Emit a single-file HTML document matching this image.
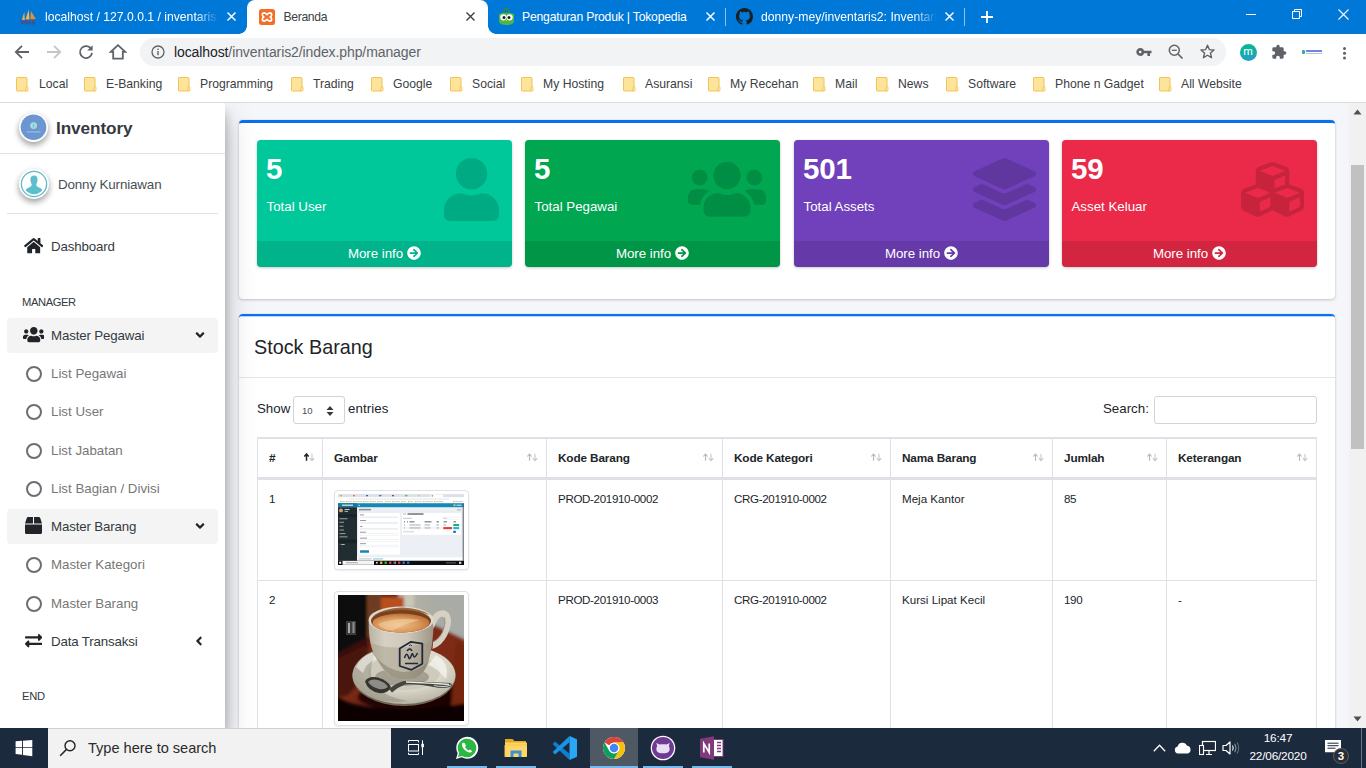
<!DOCTYPE html>
<html>
<head>
<meta charset="utf-8">
<title>Beranda</title>
<style>
*{box-sizing:border-box;margin:0;padding:0}
html,body{width:1366px;height:768px;overflow:hidden;background:#fff;font-family:"Liberation Sans",sans-serif;}
.abs{position:absolute}
#tabbar{position:absolute;left:0;top:0;width:1366px;height:34px;background:#0078d7;}
.tab{position:absolute;top:0;height:34px;color:#fff;font-size:12.2px;line-height:34px;white-space:nowrap;overflow:hidden}
.tab .tt{position:absolute;left:0;top:0}
.tabx{position:absolute;top:11px;width:11px;height:11px}
#activetab{position:absolute;left:247px;top:0;width:241px;height:34px;background:#fff;border-radius:8px 8px 0 0;}
#activetab:before,#activetab:after{content:"";position:absolute;bottom:0;width:8px;height:8px;background:radial-gradient(circle at 0 0,rgba(255,255,255,0) 7.5px,#fff 8px);}
#activetab:before{left:-8px}
#activetab:after{right:-8px;background:radial-gradient(circle at 100% 0,rgba(255,255,255,0) 7.5px,#fff 8px);}
#toolbar{position:absolute;left:0;top:34px;width:1366px;height:36px;background:#fff}
#omni{position:absolute;left:140px;top:4px;width:1086px;height:28px;border-radius:14px;background:#f1f3f4}
#url{position:absolute;left:174px;top:0;line-height:36px;font-size:14px;color:#202124;white-space:nowrap;letter-spacing:-0.1px}
#url span{color:#5f6368}
#bm{position:absolute;left:0;top:70px;width:1366px;height:33px;background:#fff;border-bottom:1px solid #dadce0}
.bk{position:absolute;top:0;line-height:28px;font-size:12.2px;color:#3c4043;white-space:nowrap}
.fold{position:absolute;top:6.500px;width:13px;height:15px}
#page{position:absolute;left:0;top:103px;width:1349px;height:625px;background:#f4f6f9;overflow:hidden;font-size:14.4px;color:#212529}
#sb{position:absolute;left:1349px;top:103px;width:17px;height:625px;background:#f1f1f1}
#taskbar{position:absolute;left:0;top:728px;width:1366px;height:40px;background:#1c2a3d}

#side{position:absolute;left:0;top:0;width:225px;height:625px;background:#fff;box-shadow:0 14px 28px rgba(0,0,0,.25),0 10px 10px rgba(0,0,0,.22);z-index:5}
.nt{position:absolute;white-space:nowrap;line-height:20px;height:20px;font-size:13.300px;color:#343a40;margin-top:1px;letter-spacing:-.15px}
.nt.sub{color:#777;letter-spacing:0}
.hl{position:absolute;left:7px;width:211px;height:35px;border-radius:4px;background:#f4f4f5}
.ico{position:absolute;fill:#212529}
.circ{position:absolute;left:25.500px;width:16px;height:16px;border:2px solid #6b6f73;border-radius:50%}

.card{position:absolute;left:239px;width:1096px;background:#fff;border-top:3px solid #fff;border-radius:4px;box-shadow:0 0 1px rgba(0,0,0,.125),0 1px 3px rgba(0,0,0,.2)}
.sbx{position:absolute;top:17px;width:255px;height:127px;border-radius:4px;box-shadow:0 0 1px rgba(0,0,0,.125),0 1px 3px rgba(0,0,0,.2);overflow:hidden;color:#fff}
.sbx .ft{position:absolute;left:0;bottom:0;width:100%;height:26px;background:rgba(0,0,0,.1)}
.sbx .num{position:absolute;left:9px;top:11px;font-size:29.500px;font-weight:700;line-height:36px;white-space:nowrap;letter-spacing:-.2px}
.sbx .lb{position:absolute;left:9.500px;top:56.500px;font-size:13.300px;line-height:20px;white-space:nowrap}
.sbx .mi{position:absolute;left:91px;top:103.500px;font-size:13.300px;line-height:20px;white-space:nowrap;letter-spacing:-.05px}
.sbx svg.bi{position:absolute;fill:rgba(0,0,0,.15)}
.sbx svg.ar{position:absolute;left:150px;top:106px;fill:#fff}
table.dt{position:absolute;left:18px;top:120px;border-collapse:collapse;font-size:11.700px;color:#212529}

.tb{position:absolute;background:#dee2e6}
.th{position:absolute;top:133px;font-size:11.800px;font-weight:700;line-height:16px;white-space:nowrap;color:#212529;letter-spacing:-.15px}
.td{position:absolute;font-size:11.600px;line-height:16px;white-space:nowrap;color:#212529;letter-spacing:-.35px}
.srt{position:absolute;top:136px}
.thumb{position:absolute;left:95px;width:135px;border:1px solid #dee2e6;border-radius:4px;background:#fff;padding:3px 4px 4px 3px;box-shadow:0 1px 2px rgba(0,0,0,.075);overflow:hidden}
.card:before{content:"";position:absolute;left:0;top:-3px;width:100%;height:6px;border-top:2px solid #0672f3;border-radius:4px 4px 0 0}
.card:after{content:"";position:absolute;left:3px;right:3px;top:-1px;height:1px;background:rgba(6,114,243,.28)}
.c1:before{border-top-width:3px}.c1:after{display:none}
</style>
</head>
<body>
<!-- ===== Chrome tab strip ===== -->
<div id="tabbar">
  <!-- tab 1 -->
  <svg class="abs" style="left:20px;top:8px" width="18" height="18" viewBox="0 0 18 18">
    <path d="M1.800 12.300 L4.300 3.800 L4.900 12.300 Z" fill="#f6a545"/><path d="M5.600 11.400 L8.700 1.500 L9.500 11.400 Z" fill="#f8b458"/><path d="M10.300 11.200 L10.900 3 L15.800 10.900 Z" fill="#ef8d1f"/>
    <path d="M1.600 16.600 V12.900 H4 Q5.200 13 5.200 14 Q5.200 15 4 15.100 H1.600 M6.600 16.600 V12.900 L8.400 15.300 L10.200 12.900 V16.600 M11.600 16.600 L13.500 12.900 L15.400 16.600 M12.300 15.500 H14.700" stroke="#46508a" stroke-width="1.300" fill="none"/>
  </svg>
  <div class="tab" style="left:45px;width:174px;-webkit-mask-image:linear-gradient(90deg,#000 150px,transparent 174px)"><span class="tt">localhost / 127.0.0.1 / inventaris2</span></div>
  <svg class="tabx" style="left:226px" viewBox="0 0 11 11"><path d="M1.5 1.5 L9.5 9.5 M9.5 1.5 L1.5 9.5" stroke="#fff" stroke-width="1.5"/></svg>
  <!-- active tab -->
  <div id="activetab"></div>
  <svg class="abs" style="left:259px;top:9px" width="16" height="16" viewBox="0 0 16 16"><rect width="16" height="16" rx="2.500" fill="#f56e25"/>
    <path d="M4 4.2 C5.5 3.2 7 4.6 8 5.6 C9 4.6 10.5 3.2 12 4.2 C13.4 5.4 12.4 7.2 11.2 8 C12.4 8.8 13.4 10.600 12 11.800 C10.500 12.800 9 11.400 8 10.400 C7 11.400 5.500 12.800 4 11.800 C2.600 10.600 3.600 8.800 4.800 8 C3.600 7.200 2.600 5.400 4 4.200 Z" fill="none" stroke="#fff" stroke-width="1.7" stroke-linejoin="round"/></svg>
  <div class="tab" style="left:283.500px;width:150px;color:#3c4043;letter-spacing:-.35px"><span class="tt">Beranda</span></div>
  <svg class="tabx" style="left:465px" viewBox="0 0 11 11"><path d="M1.5 1.5 L9.5 9.5 M9.5 1.5 L1.5 9.500" stroke="#3c4043" stroke-width="1.400"/></svg>
  <!-- tab 3 -->
  <svg class="abs" style="left:498px;top:8px" width="17" height="18" viewBox="0 0 17 18">
    <path d="M5.500 5 Q5.500 1 8.500 1 Q11.500 1 11.500 5" fill="none" stroke="#2f8f3a" stroke-width="1.300"/>
    <path d="M1 6 Q8.500 3.500 16 6 L16 13 Q16 17 8.500 17 Q1 17 1 13 Z" fill="#4cb748"/>
    <circle cx="5.400" cy="9.300" r="3.100" fill="#fff"/><circle cx="11.600" cy="9.300" r="3.100" fill="#fff"/>
    <circle cx="6" cy="9.500" r="1.500" fill="#222"/><circle cx="11" cy="9.500" r="1.500" fill="#222"/>
    <path d="M7.600 12 L8.500 13.600 L9.400 12 Z" fill="#f7c52b"/>
  </svg>
  <div class="tab" style="left:522px;width:175px;letter-spacing:-.2px"><span class="tt">Pengaturan Produk | Tokopedia</span></div>
  <svg class="tabx" style="left:705px" viewBox="0 0 11 11"><path d="M1.500 1.500 L9.500 9.500 M9.500 1.500 L1.500 9.500" stroke="#fff" stroke-width="1.500"/></svg>
  <div class="abs" style="left:725px;top:8px;width:1px;height:18px;background:rgba(255,255,255,.55)"></div>
  <!-- tab 4 -->
  <svg class="abs" style="left:736px;top:8px" width="17" height="17" viewBox="0 0 16 16"><path fill="#1b1f23" d="M8 0C3.580 0 0 3.580 0 8c0 3.540 2.290 6.530 5.470 7.590.4.070.55-.170.55-.380 0-.190-.010-.820-.010-1.490-2.010.370-2.530-.490-2.690-.940-.090-.230-.480-.940-.820-1.130-.280-.150-.680-.520-.010-.530.630-.010 1.080.580 1.230.820.720 1.210 1.870.870 2.330.660.070-.520.280-.870.510-1.070-1.780-.200-3.640-.890-3.640-3.950 0-.870.310-1.590.820-2.150-.080-.200-.360-1.020.080-2.120 0 0 .670-.210 2.200.820.640-.180 1.320-.270 2-.270.680 0 1.360.090 2 .270 1.530-1.040 2.200-.820 2.200-.820.440 1.100.160 1.920.080 2.120.510.560.820 1.270.820 2.150 0 3.070-1.870 3.750-3.650 3.950.290.250.540.730.540 1.480 0 1.070-.010 1.930-.010 2.200 0 .210.150.460.550.380A8.013 8.013 0 0016 8c0-4.420-3.580-8-8-8z"/></svg>
  <div class="tab" style="left:761px;width:176px;-webkit-mask-image:linear-gradient(90deg,#000 152px,transparent 176px)"><span class="tt">donny-mey/inventaris2: Inventaris</span></div>
  <svg class="tabx" style="left:944px" viewBox="0 0 11 11"><path d="M1.500 1.500 L9.500 9.500 M9.500 1.500 L1.500 9.500" stroke="#fff" stroke-width="1.500"/></svg>
  <div class="abs" style="left:964px;top:8px;width:1px;height:18px;background:rgba(255,255,255,.55)"></div>
  <svg class="abs" style="left:980px;top:10px" width="14" height="14" viewBox="0 0 14 14"><path d="M7 1 V13 M1 7 H13" stroke="#fff" stroke-width="1.800"/></svg>
  <!-- window controls -->
  <div class="abs" style="left:1246px;top:14px;width:10px;height:1px;background:#fff"></div>
  <svg class="abs" style="left:1292px;top:9px" width="10" height="10" viewBox="0 0 10 10"><path d="M.5 2.500 h7 v7 h-7 z M2.500 2.500 V.5 h7 v7 H7.500" fill="none" stroke="#fff" stroke-width="1"/></svg>
  <svg class="abs" style="left:1338px;top:9px" width="11" height="11" viewBox="0 0 11 11"><path d="M.5 .5 L10.500 10.500 M10.500 .5 L.5 10.500" stroke="#fff" stroke-width="1.100"/></svg>
</div>
<!-- ===== toolbar ===== -->
<div id="toolbar">
  <div id="omni"></div>
  <!-- back -->
  <svg class="abs" style="left:14px;top:10px" width="16" height="16" viewBox="0 0 16 16"><path d="M15 8 H2.500 M8 1.800 L1.800 8 L8 14.200" fill="none" stroke="#5f6368" stroke-width="1.800"/></svg>
  <!-- forward -->
  <svg class="abs" style="left:46px;top:10px" width="16" height="16" viewBox="0 0 16 16"><path d="M1 8 H13.500 M8 1.800 L14.200 8 L8 14.200" fill="none" stroke="#c4c7ca" stroke-width="1.800"/></svg>
  <!-- reload -->
  <svg class="abs" style="left:78px;top:10px" width="16" height="16" viewBox="0 0 16 16"><path d="M13.300 5.200 A6 6 0 1 0 14 8.800" fill="none" stroke="#5f6368" stroke-width="1.800"/><path d="M14.600 1.200 V6.600 H9.200 Z" fill="#5f6368"/></svg>
  <!-- home -->
  <svg class="abs" style="left:109px;top:9px" width="18" height="18" viewBox="0 0 18 18"><path d="M9 2.200 L1.800 8.800 H4.200 V15.600 H13.800 V8.800 H16.200 Z" fill="none" stroke="#5f6368" stroke-width="1.800" stroke-linejoin="miter"/></svg>
  <!-- info -->
  <svg class="abs" style="left:151px;top:11px" width="14" height="14" viewBox="0 0 14 14"><circle cx="7" cy="7" r="6" fill="none" stroke="#5f6368" stroke-width="1.300"/><rect x="6.300" y="6" width="1.400" height="4.200" fill="#5f6368"/><rect x="6.300" y="3.600" width="1.400" height="1.400" fill="#5f6368"/></svg>
  <div id="url">localhost<span>/inventaris2/index.php/manager</span></div>
  <!-- key -->
  <svg class="abs" style="left:1136px;top:12px" width="16" height="12" viewBox="0 0 16 12"><circle cx="4.200" cy="6" r="2.600" fill="none" stroke="#5f6368" stroke-width="2.600"/><path d="M7.500 4.700 H15.500 V7.300 H14 V10 H11.400 V7.300 H7.500 Z" fill="#5f6368"/></svg>
  <!-- zoom out -->
  <svg class="abs" style="left:1167px;top:9px" width="18" height="18" viewBox="0 0 18 18"><circle cx="7.300" cy="7.300" r="5" fill="none" stroke="#5f6368" stroke-width="1.500"/><path d="M11 11 L15.500 15.500" stroke="#5f6368" stroke-width="1.700"/><path d="M4.800 7.300 H9.800" stroke="#5f6368" stroke-width="1.300"/></svg>
  <!-- star -->
  <svg class="abs" style="left:1199px;top:9px" width="17" height="17" viewBox="0 0 24 24"><path d="M12 3.200 L14.600 9.300 L21.200 9.900 L16.200 14.200 L17.700 20.700 L12 17.300 L6.300 20.700 L7.800 14.200 L2.800 9.900 L9.400 9.300 Z" fill="none" stroke="#5f6368" stroke-width="2" stroke-linejoin="round"/></svg>
  <!-- avatar -->
  <div class="abs" style="left:1239.500px;top:9.500px;width:17px;height:17px;border-radius:9px;background:linear-gradient(170deg,#0bb39c 30%,#2a9bd0 100%);color:#fff;font-size:11.500px;line-height:15px;text-align:center;font-weight:400">m</div>
  <!-- puzzle -->
  <svg class="abs" style="left:1271px;top:10px" width="16" height="16" viewBox="0 0 24 24"><path fill="#5f6368" d="M20.500 11H19V7c0-1.100-.9-2-2-2h-4V3.500C13 2.120 11.880 1 10.500 1S8 2.120 8 3.500V5H4c-1.100 0-1.990.9-1.990 2v3.800H3.500c1.490 0 2.700 1.210 2.700 2.700s-1.210 2.700-2.700 2.700H2V20c0 1.100.9 2 2 2h3.800v-1.500c0-1.490 1.210-2.700 2.700-2.700 1.490 0 2.700 1.210 2.700 2.700V22H17c1.100 0 2-.9 2-2v-4h1.500c1.380 0 2.500-1.120 2.500-2.500S21.880 11 20.500 11z"/></svg>
  <!-- small ext logo -->
  <div class="abs" style="left:1302px;top:15.500px;width:3px;height:4px;background:#3aa7a0;border-radius:1px"></div>
  <div class="abs" style="left:1306px;top:15.500px;width:16px;height:2px;background:#6f86d9"></div>
  <div class="abs" style="left:1306px;top:18.500px;width:16px;height:1px;background:#b5c1e8"></div>
  <!-- menu -->
  <div class="abs" style="left:1343px;top:12.500px;width:3px;height:3px;border-radius:2px;background:#5f6368;box-shadow:0 4.800px 0 #5f6368,0 9.600px 0 #5f6368"></div>
</div>
<!-- ===== bookmarks ===== -->
<div id="bm">
  <svg class="fold" style="left:16px" viewBox="0 0 13 15"><rect x=".5" y=".5" width="10.500" height="13.500" rx=".6" fill="#fde49b" stroke="#f3c355" stroke-width="1"/><rect x="9.700" y="9.700" width="2.300" height="4.300" rx=".9" fill="#fdeab0" stroke="#f3c355" stroke-width=".9"/></svg><div class="bk" style="left:39px">Local</div>
  <svg class="fold" style="left:84px" viewBox="0 0 13 15"><rect x=".5" y=".5" width="10.500" height="13.500" rx=".6" fill="#fde49b" stroke="#f3c355" stroke-width="1"/><rect x="9.700" y="9.700" width="2.300" height="4.300" rx=".9" fill="#fdeab0" stroke="#f3c355" stroke-width=".9"/></svg><div class="bk" style="left:106px">E-Banking</div>
  <svg class="fold" style="left:178px" viewBox="0 0 13 15"><rect x=".5" y=".5" width="10.500" height="13.500" rx=".6" fill="#fde49b" stroke="#f3c355" stroke-width="1"/><rect x="9.700" y="9.700" width="2.300" height="4.300" rx=".9" fill="#fdeab0" stroke="#f3c355" stroke-width=".9"/></svg><div class="bk" style="left:200px">Programming</div>
  <svg class="fold" style="left:291px" viewBox="0 0 13 15"><rect x=".5" y=".5" width="10.500" height="13.500" rx=".6" fill="#fde49b" stroke="#f3c355" stroke-width="1"/><rect x="9.700" y="9.700" width="2.300" height="4.300" rx=".9" fill="#fdeab0" stroke="#f3c355" stroke-width=".9"/></svg><div class="bk" style="left:313px">Trading</div>
  <svg class="fold" style="left:371px" viewBox="0 0 13 15"><rect x=".5" y=".5" width="10.500" height="13.500" rx=".6" fill="#fde49b" stroke="#f3c355" stroke-width="1"/><rect x="9.700" y="9.700" width="2.300" height="4.300" rx=".9" fill="#fdeab0" stroke="#f3c355" stroke-width=".9"/></svg><div class="bk" style="left:393px">Google</div>
  <svg class="fold" style="left:450px" viewBox="0 0 13 15"><rect x=".5" y=".5" width="10.500" height="13.500" rx=".6" fill="#fde49b" stroke="#f3c355" stroke-width="1"/><rect x="9.700" y="9.700" width="2.300" height="4.300" rx=".9" fill="#fdeab0" stroke="#f3c355" stroke-width=".9"/></svg><div class="bk" style="left:472px">Social</div>
  <svg class="fold" style="left:521px" viewBox="0 0 13 15"><rect x=".5" y=".5" width="10.500" height="13.500" rx=".6" fill="#fde49b" stroke="#f3c355" stroke-width="1"/><rect x="9.700" y="9.700" width="2.300" height="4.300" rx=".9" fill="#fdeab0" stroke="#f3c355" stroke-width=".9"/></svg><div class="bk" style="left:543px">My Hosting</div>
  <svg class="fold" style="left:623px" viewBox="0 0 13 15"><rect x=".5" y=".5" width="10.500" height="13.500" rx=".6" fill="#fde49b" stroke="#f3c355" stroke-width="1"/><rect x="9.700" y="9.700" width="2.300" height="4.300" rx=".9" fill="#fdeab0" stroke="#f3c355" stroke-width=".9"/></svg><div class="bk" style="left:645px">Asuransi</div>
  <svg class="fold" style="left:708px" viewBox="0 0 13 15"><rect x=".5" y=".5" width="10.500" height="13.500" rx=".6" fill="#fde49b" stroke="#f3c355" stroke-width="1"/><rect x="9.700" y="9.700" width="2.300" height="4.300" rx=".9" fill="#fdeab0" stroke="#f3c355" stroke-width=".9"/></svg><div class="bk" style="left:730px">My Recehan</div>
  <svg class="fold" style="left:813px" viewBox="0 0 13 15"><rect x=".5" y=".5" width="10.500" height="13.500" rx=".6" fill="#fde49b" stroke="#f3c355" stroke-width="1"/><rect x="9.700" y="9.700" width="2.300" height="4.300" rx=".9" fill="#fdeab0" stroke="#f3c355" stroke-width=".9"/></svg><div class="bk" style="left:835px">Mail</div>
  <svg class="fold" style="left:876px" viewBox="0 0 13 15"><rect x=".5" y=".5" width="10.500" height="13.500" rx=".6" fill="#fde49b" stroke="#f3c355" stroke-width="1"/><rect x="9.700" y="9.700" width="2.300" height="4.300" rx=".9" fill="#fdeab0" stroke="#f3c355" stroke-width=".9"/></svg><div class="bk" style="left:898px">News</div>
  <svg class="fold" style="left:946px" viewBox="0 0 13 15"><rect x=".5" y=".5" width="10.500" height="13.500" rx=".6" fill="#fde49b" stroke="#f3c355" stroke-width="1"/><rect x="9.700" y="9.700" width="2.300" height="4.300" rx=".9" fill="#fdeab0" stroke="#f3c355" stroke-width=".9"/></svg><div class="bk" style="left:968px">Software</div>
  <svg class="fold" style="left:1033px" viewBox="0 0 13 15"><rect x=".5" y=".5" width="10.500" height="13.500" rx=".6" fill="#fde49b" stroke="#f3c355" stroke-width="1"/><rect x="9.700" y="9.700" width="2.300" height="4.300" rx=".9" fill="#fdeab0" stroke="#f3c355" stroke-width=".9"/></svg><div class="bk" style="left:1055px">Phone n Gadget</div>
  <svg class="fold" style="left:1159px" viewBox="0 0 13 15"><rect x=".5" y=".5" width="10.500" height="13.500" rx=".6" fill="#fde49b" stroke="#f3c355" stroke-width="1"/><rect x="9.700" y="9.700" width="2.300" height="4.300" rx=".9" fill="#fdeab0" stroke="#f3c355" stroke-width=".9"/></svg><div class="bk" style="left:1181px">All Website</div>
</div>
<!-- ===== page ===== -->
<div id="page">
<div id="side">
<div class="abs" style="left:0;top:50px;width:225px;height:1px;background:#dee2e6"></div>
<div class="abs" style="left:19px;top:10px;width:29px;height:29px;border-radius:50%;background:#fff;box-shadow:0 3px 6px rgba(0,0,0,.22),0 3px 6px rgba(0,0,0,.2)"></div><svg class="abs" style="left:19px;top:10px" width="29" height="29" viewBox="0 0 29 29"><circle cx="14.500" cy="14.300" r="12.800" fill="#6c96cf"/><circle cx="14.600" cy="12.600" r="3.400" fill="#a9e3df"/><path d="M12.300 11 L16.800 14.300 M16.800 11 L12.500 14.500 M14.600 9.500 V15.800" stroke="#7fc3d6" stroke-width=".7"/><rect x="7.500" y="18.300" width="14" height="1.200" fill="#9dc6e6" opacity=".85"/></svg>
<div class="abs" style="left:56px;top:14px;font-size:17.200px;font-weight:700;color:#343a40;line-height:22px;white-space:nowrap;letter-spacing:-.1px">Inventory</div>
<div class="abs" style="left:19px;top:66px;width:30px;height:30px;border-radius:50%;background:#fff;box-shadow:0 3px 6px rgba(0,0,0,.22),0 3px 6px rgba(0,0,0,.2)"></div><svg class="abs" style="left:19px;top:66px" width="30" height="30" viewBox="0 0 30 30"><circle cx="15" cy="15" r="12.600" fill="#fff" stroke="#5bbcc8" stroke-width="1.300"/><path d="M15 6.600 C17.600 6.600 18.800 8.600 18.600 11 C18.400 13.300 17.500 14.600 17.300 15.600 C17.200 17.200 18.600 18 20.600 18.700 C22.400 19.300 23.200 20.300 23.300 21.600 Q19.500 25.200 15 25.200 Q10.500 25.200 6.700 21.600 C6.800 20.300 7.600 19.300 9.400 18.700 C11.400 18 12.800 17.200 12.700 15.600 C12.500 14.600 11.600 13.300 11.400 11 C11.200 8.600 12.400 6.600 15 6.600 Z" fill="#5cbfca"/></svg>
<div class="nt" style="left:58px;top:71px;font-size:13.400px;color:#495057">Donny Kurniawan</div>
<div class="abs" style="left:7px;top:110px;width:211px;height:1px;background:#dee2e6"></div>
<svg class="ico" style="left:23.500px;top:134.200px;" width="19.400" height="17.300" viewBox="0 0 576 512"><path d="M280.37 148.26L96 300.11V464a16 16 0 0 0 16 16l112.06-.29a16 16 0 0 0 15.92-16V368a16 16 0 0 1 16-16h64a16 16 0 0 1 16 16v95.64a16 16 0 0 0 16 16.05L464 480a16 16 0 0 0 16-16V300L295.67 148.26a12.19 12.19 0 0 0-15.3 0zM571.6 251.47L488 182.56V44.05a12 12 0 0 0-12-12h-56a12 12 0 0 0-12 12v72.61L318.47 43a48 48 0 0 0-61 0L4.34 251.47a12 12 0 0 0-1.6 16.9l25.5 31A12 12 0 0 0 45.15 301l235.22-193.74a12.19 12.19 0 0 1 15.3 0L530.9 301a12 12 0 0 0 16.9-1.6l25.5-31a12 12 0 0 0-1.7-16.93z"/></svg><div class="nt " style="left:51px;top:133px">Dashboard</div>
<div class="nt" style="left:22px;top:188px;font-size:11.200px;letter-spacing:-.4px;color:#343a40">MANAGER</div>
<div class="hl" style="top:215px"></div><svg class="ico" style="left:22.800px;top:222.600px;" width="21.600" height="17.300" viewBox="0 0 640 512"><path d="M96 224c35.3 0 64-28.7 64-64s-28.7-64-64-64-64 28.7-64 64 28.7 64 64 64zm448 0c35.3 0 64-28.7 64-64s-28.7-64-64-64-64 28.7-64 64 28.7 64 64 64zm32 32h-64c-17.6 0-33.5 7.1-45.1 18.6 40.3 22.1 68.9 62 75.1 109.4h66c17.7 0 32-14.3 32-32v-32c0-35.3-28.7-64-64-64zm-256 0c61.9 0 112-50.1 112-112S381.9 32 320 32 208 82.1 208 144s50.1 112 112 112zm76.8 32h-8.3c-20.8 10-43.9 16-68.5 16s-47.6-6-68.5-16h-8.3C179.6 288 128 339.6 128 403.2V432c0 26.5 21.5 48 48 48h288c26.5 0 48-21.5 48-48v-28.8c0-63.6-51.6-115.2-115.2-115.2zm-223.7-13.4C161.5 263.1 145.6 256 128 256H64c-35.3 0-64 28.7-64 64v32c0 17.7 14.3 32 32 32h65.9c6.3-47.4 34.9-87.3 75.2-109.4z"/></svg><div class="nt " style="left:51px;top:222px">Master Pegawai</div><svg class="ico" style="left:196px;top:225px;transform:rotate(-90deg)" width="8" height="14" viewBox="0 0 256 512"><path d="M31.7 239l136-136c9.4-9.4 24.6-9.4 33.9 0l22.6 22.6c9.4 9.4 9.4 24.6 0 33.9L127.9 256l96.4 96.4c9.4 9.4 9.4 24.6 0 33.9L201.7 409c-9.4 9.4-24.6 9.4-33.9 0l-136-136c-9.5-9.4-9.5-24.6-.1-34z"/></svg>
<div class="circ" style="top:262.5px"></div><div class="nt sub" style="left:51px;top:260px">List Pegawai</div>
<div class="circ" style="top:300.5px"></div><div class="nt sub" style="left:51px;top:298px">List User</div>
<div class="circ" style="top:339.5px"></div><div class="nt sub" style="left:51px;top:337px">List Jabatan</div>
<div class="circ" style="top:377.5px"></div><div class="nt sub" style="left:51px;top:375px">List Bagian / Divisi</div>
<div class="hl" style="top:406px"></div><svg class="ico" style="left:24.800px;top:414.200px;" width="17" height="17" viewBox="0 0 512 512"><path d="M509.5 184.6L458.9 32.8C452.4 13.2 434.1 0 413.4 0H272v192h238.7c-.4-2.5-.4-5-1.2-7.4zM240 0H98.6c-20.7 0-39 13.2-45.5 32.8L2.5 184.6c-.8 2.4-.8 4.9-1.2 7.4H240V0zM0 224v240c0 26.5 21.5 48 48 48h416c26.5 0 48-21.5 48-48V224H0z"/></svg><div class="nt " style="left:51px;top:413px">Master Barang</div><svg class="ico" style="left:196px;top:416px;transform:rotate(-90deg)" width="8" height="14" viewBox="0 0 256 512"><path d="M31.7 239l136-136c9.4-9.4 24.6-9.4 33.9 0l22.6 22.6c9.4 9.4 9.4 24.6 0 33.9L127.9 256l96.4 96.4c9.4 9.4 9.4 24.6 0 33.9L201.7 409c-9.4 9.4-24.6 9.4-33.9 0l-136-136c-9.5-9.4-9.5-24.6-.1-34z"/></svg>
<div class="circ" style="top:453.5px"></div><div class="nt sub" style="left:51px;top:451px">Master Kategori</div>
<div class="circ" style="top:492.5px"></div><div class="nt sub" style="left:51px;top:490px">Master Barang</div>
<svg class="ico" style="left:24.500px;top:529.300px;" width="17.300" height="17.300" viewBox="0 0 512 512"><path d="M0 168v-16c0-13.255 10.745-24 24-24h360V80c0-21.367 25.899-32.042 40.971-16.971l80 80c9.372 9.373 9.372 24.569 0 33.941l-80 80C409.956 271.982 384 261.456 384 240v-48H24c-13.255 0-24-10.745-24-24zm488 152H128v-48c0-21.314-25.862-32.08-40.971-16.971l-80 80c-9.372 9.373-9.372 24.569 0 33.941l80 80C102.057 463.997 128 453.437 128 432v-48h360c13.255 0 24-10.745 24-24v-16c0-13.255-10.745-24-24-24z"/></svg><div class="nt " style="left:51px;top:528px">Data Transaksi</div><svg class="ico" style="left:195px;top:531px;" width="8" height="14" viewBox="0 0 256 512"><path d="M31.7 239l136-136c9.4-9.4 24.6-9.4 33.9 0l22.6 22.6c9.4 9.4 9.4 24.6 0 33.9L127.9 256l96.4 96.4c9.4 9.4 9.4 24.6 0 33.9L201.7 409c-9.4 9.4-24.6 9.4-33.9 0l-136-136c-9.5-9.4-9.5-24.6-.1-34z"/></svg>
<div class="nt" style="left:22px;top:582px;font-size:11.200px;letter-spacing:-.3px;color:#343a40">END</div>
</div>
<div class="card c1" style="top:17px;height:179px">
<div class="sbx" style="left:18px;background:#00c89a"><div class="num">5</div><div class="lb">Total User</div><svg class="bi" style="left:186.500px;top:18px" width="55" height="63" viewBox="0 0 448 512"><path d="M224 256c70.7 0 128-57.3 128-128S294.7 0 224 0 96 57.3 96 128s57.3 128 128 128zm89.6 32h-16.7c-22.2 10.2-46.9 16-72.9 16s-50.6-5.8-72.9-16h-16.7C60.2 288 0 348.2 0 422.4V464c0 26.5 21.5 48 48 48h352c26.5 0 48-21.5 48-48v-41.6c0-74.2-60.2-134.4-134.4-134.4z"/></svg><div class="ft"></div><div class="mi">More info</div><svg class="ar" style="" width="14" height="14" viewBox="0 0 512 512"><path d="M256 8c137 0 248 111 248 248S393 504 256 504 8 393 8 256 119 8 256 8zm-28.9 143.6l75.5 72.400H120c-13.300 0-24 10.700-24 24v16c0 13.300 10.700 24 24 24h182.600l-75.500 72.400c-9.700 9.300-9.900 24.800-.4 34.300l11 10.900c9.400 9.400 24.600 9.400 33.900 0L404.300 273c9.400-9.400 9.400-24.600 0-33.900L271.600 106.300c-9.400-9.400-24.600-9.400-33.900 0l-11 10.900c-9.500 9.600-9.300 25.100.4 34.400z"/></svg></div>
<div class="sbx" style="left:286px;background:#00a650"><div class="num">5</div><div class="lb">Total Pegawai</div><svg class="bi" style="left:163px;top:18px" width="78" height="62.5" viewBox="0 0 640 512"><path d="M96 224c35.3 0 64-28.7 64-64s-28.7-64-64-64-64 28.7-64 64 28.7 64 64 64zm448 0c35.3 0 64-28.7 64-64s-28.7-64-64-64-64 28.7-64 64 28.7 64 64 64zm32 32h-64c-17.6 0-33.5 7.1-45.1 18.6 40.3 22.1 68.9 62 75.1 109.4h66c17.7 0 32-14.3 32-32v-32c0-35.3-28.7-64-64-64zm-256 0c61.9 0 112-50.1 112-112S381.9 32 320 32 208 82.1 208 144s50.1 112 112 112zm76.8 32h-8.3c-20.8 10-43.9 16-68.5 16s-47.6-6-68.5-16h-8.3C179.6 288 128 339.6 128 403.2V432c0 26.5 21.5 48 48 48h288c26.5 0 48-21.5 48-48v-28.8c0-63.6-51.6-115.2-115.2-115.2zm-223.7-13.4C161.5 263.1 145.6 256 128 256H64c-35.3 0-64 28.7-64 64v32c0 17.7 14.3 32 32 32h65.9c6.3-47.4 34.9-87.3 75.2-109.4z"/></svg><div class="ft"></div><div class="mi">More info</div><svg class="ar" style="" width="14" height="14" viewBox="0 0 512 512"><path d="M256 8c137 0 248 111 248 248S393 504 256 504 8 393 8 256 119 8 256 8zm-28.9 143.6l75.5 72.400H120c-13.300 0-24 10.700-24 24v16c0 13.300 10.700 24 24 24h182.600l-75.500 72.400c-9.700 9.300-9.900 24.800-.4 34.300l11 10.900c9.400 9.400 24.600 9.400 33.900 0L404.300 273c9.400-9.400 9.400-24.600 0-33.900L271.600 106.300c-9.400-9.400-24.600-9.400-33.900 0l-11 10.900c-9.500 9.600-9.300 25.100.4 34.400z"/></svg></div>
<div class="sbx" style="left:555px;background:#7140bb"><div class="num">501</div><div class="lb">Total Assets</div><svg class="bi" style="left:179px;top:18px" width="63" height="63" viewBox="0 0 512 512"><path d="M12.41 148.02l232.94 105.67c6.8 3.09 14.49 3.09 21.29 0l232.94-105.67c16.55-7.51 16.55-32.52 0-40.03L266.65 2.31a25.607 25.607 0 0 0-21.29 0L12.41 107.98c-16.55 7.51-16.55 32.53 0 40.04zm487.18 88.28l-58.09-26.33-161.64 73.27c-7.56 3.43-15.59 5.17-23.86 5.17s-16.29-1.74-23.86-5.17L70.51 209.97l-58.1 26.33c-16.55 7.5-16.55 32.5 0 40l232.94 105.59c6.8 3.08 14.49 3.08 21.29 0L499.59 276.3c16.55-7.5 16.55-32.5 0-40zm0 127.8l-57.87-26.23-161.86 73.37c-7.56 3.43-15.59 5.17-23.86 5.17s-16.29-1.74-23.86-5.17L70.29 337.87 12.41 364.1c-16.55 7.5-16.55 32.5 0 40l232.94 105.59c6.8 3.08 14.49 3.08 21.29 0L499.59 404.1c16.55-7.5 16.55-32.5 0-40z"/></svg><div class="ft"></div><div class="mi">More info</div><svg class="ar" style="" width="14" height="14" viewBox="0 0 512 512"><path d="M256 8c137 0 248 111 248 248S393 504 256 504 8 393 8 256 119 8 256 8zm-28.9 143.6l75.5 72.400H120c-13.300 0-24 10.700-24 24v16c0 13.300 10.700 24 24 24h182.600l-75.500 72.400c-9.700 9.300-9.900 24.800-.4 34.300l11 10.900c9.400 9.400 24.600 9.400 33.900 0L404.300 273c9.400-9.400 9.400-24.600 0-33.900L271.600 106.300c-9.400-9.400-24.600-9.400-33.900 0l-11 10.900c-9.500 9.600-9.300 25.100.4 34.400z"/></svg></div>
<div class="sbx" style="left:823px;background:#ea2a48"><div class="num">59</div><div class="lb">Asset Keluar</div><svg class="bi" style="left:179px;top:18px" width="63" height="63" viewBox="0 0 512 512"><path d="M488.6 250.2L392 214V105.5c0-15-9.3-28.4-23.4-33.7l-100-37.5c-8.1-3.1-17.1-3.1-25.3 0l-100 37.5c-14.1 5.3-23.4 18.7-23.4 33.700V214l-96.6 36.200C9.300 255.500 0 268.900 0 283.900V394c0 13.600 7.700 26.100 19.900 32.200l100 50c10.100 5.100 22.100 5.100 32.200 0l103.900-52 103.900 52c10.100 5.100 22.100 5.100 32.200 0l100-50c12.200-6.100 19.900-18.600 19.900-32.200V283.900c0-15-9.300-28.400-23.400-33.700zM358 214.800l-85 31.900v-68.200l85-37v73.300zM154 104.100l102-38.200 102 38.200v.6l-102 41.400-102-41.400v-.6zm84 291.100l-85 42.500v-79.100l85-38.800v75.400zm0-112l-102 41.400-102-41.400v-.6l102-38.200 102 38.200v.6zm240 112l-85 42.500v-79.100l85-38.800v75.400zm0-112l-102 41.400-102-41.400v-.6l102-38.200 102 38.200v.6z"/></svg><div class="ft"></div><div class="mi">More info</div><svg class="ar" style="" width="14" height="14" viewBox="0 0 512 512"><path d="M256 8c137 0 248 111 248 248S393 504 256 504 8 393 8 256 119 8 256 8zm-28.9 143.6l75.5 72.400H120c-13.300 0-24 10.700-24 24v16c0 13.300 10.700 24 24 24h182.600l-75.500 72.400c-9.700 9.300-9.900 24.800-.4 34.300l11 10.900c9.400 9.400 24.600 9.400 33.900 0L404.300 273c9.400-9.400 9.400-24.600 0-33.900L271.600 106.300c-9.400-9.400-24.600-9.400-33.900 0l-11 10.900c-9.500 9.600-9.300 25.100.4 34.400z"/></svg></div>
</div>
<div class="card" style="top:211px;height:500px">
<div class="abs" style="left:15px;top:16px;font-size:19.800px;line-height:28px;white-space:nowrap;color:#212529;letter-spacing:0">Stock Barang</div>
<div class="abs" style="left:0;top:60px;width:1096px;height:1px;background:rgba(0,0,0,.1)"></div>
<div class="abs" style="left:18px;top:82px;font-size:13.300px;line-height:20px">Show</div>
<div class="abs" style="left:54px;top:79px;width:52px;height:28px;border:1px solid #ced4da;border-radius:3px;background:#fff"><span class="abs" style="left:8px;top:7.500px;font-size:9.500px;line-height:12px;color:#495057">10</span><svg class="abs" style="left:32px;top:9px" width="8" height="10" viewBox="0 0 8 10"><path d="M4 0 L7.500 4 H.5 Z M4 10 L7.500 6 H.5 Z" fill="#343a40"/></svg></div>
<div class="abs" style="left:109px;top:82px;font-size:13.300px;line-height:20px;letter-spacing:.1px">entries</div>
<div class="abs" style="left:864px;top:82px;font-size:13.300px;line-height:20px">Search:</div>
<div class="abs" style="left:915px;top:79px;width:163px;height:28px;border:1px solid #ced4da;border-radius:3px;background:#fff"></div>
<div class="tb" style="left:18px;top:120px;width:1060px;height:2px"></div>
<div class="tb" style="left:18px;top:160px;width:1060px;height:3px"></div>
<div class="tb" style="left:18px;top:263px;width:1060px;height:1px"></div>
<div class="tb" style="left:18px;top:120px;width:1px;height:300px"></div>
<div class="tb" style="left:83px;top:120px;width:1px;height:300px"></div>
<div class="tb" style="left:307px;top:120px;width:1px;height:300px"></div>
<div class="tb" style="left:483px;top:120px;width:1px;height:300px"></div>
<div class="tb" style="left:651px;top:120px;width:1px;height:300px"></div>
<div class="tb" style="left:813px;top:120px;width:1px;height:300px"></div>
<div class="tb" style="left:927px;top:120px;width:1px;height:300px"></div>
<div class="tb" style="left:1077px;top:120px;width:1px;height:300px"></div>
<div class="th" style="left:30px">#</div><svg class="srt" style="left:64px" width="13" height="10" viewBox="0 0 13 10"><path d="M3.500 7.800 V1.200 M1.300 3.500 L3.500 1 L5.700 3.500" fill="none" stroke="#212529" stroke-width="1.5"/><path d="M9 .8 V7.400 M6.800 5.100 L9 7.600 L11.200 5.100" fill="none" stroke="#c5c8cb" stroke-width="1.100"/></svg>
<div class="th" style="left:95px">Gambar</div><svg class="srt" style="left:287px" width="13" height="10" viewBox="0 0 13 10"><path d="M3.500 7.800 V1.200 M1.300 3.500 L3.500 1 L5.700 3.500" fill="none" stroke="#b5b8bb" stroke-width="1.1"/><path d="M9 .8 V7.400 M6.800 5.100 L9 7.600 L11.200 5.100" fill="none" stroke="#c5c8cb" stroke-width="1.100"/></svg>
<div class="th" style="left:319px">Kode Barang</div><svg class="srt" style="left:463px" width="13" height="10" viewBox="0 0 13 10"><path d="M3.500 7.800 V1.200 M1.300 3.500 L3.500 1 L5.700 3.500" fill="none" stroke="#b5b8bb" stroke-width="1.1"/><path d="M9 .8 V7.400 M6.800 5.100 L9 7.600 L11.200 5.100" fill="none" stroke="#c5c8cb" stroke-width="1.100"/></svg>
<div class="th" style="left:495px">Kode Kategori</div><svg class="srt" style="left:631px" width="13" height="10" viewBox="0 0 13 10"><path d="M3.500 7.800 V1.200 M1.300 3.500 L3.500 1 L5.700 3.500" fill="none" stroke="#b5b8bb" stroke-width="1.1"/><path d="M9 .8 V7.400 M6.800 5.100 L9 7.600 L11.200 5.100" fill="none" stroke="#c5c8cb" stroke-width="1.100"/></svg>
<div class="th" style="left:663px">Nama Barang</div><svg class="srt" style="left:793px" width="13" height="10" viewBox="0 0 13 10"><path d="M3.500 7.800 V1.200 M1.300 3.500 L3.500 1 L5.700 3.500" fill="none" stroke="#b5b8bb" stroke-width="1.1"/><path d="M9 .8 V7.400 M6.800 5.100 L9 7.600 L11.200 5.100" fill="none" stroke="#c5c8cb" stroke-width="1.100"/></svg>
<div class="th" style="left:825px">Jumlah</div><svg class="srt" style="left:907px" width="13" height="10" viewBox="0 0 13 10"><path d="M3.500 7.800 V1.200 M1.300 3.500 L3.500 1 L5.700 3.500" fill="none" stroke="#b5b8bb" stroke-width="1.1"/><path d="M9 .8 V7.400 M6.800 5.100 L9 7.600 L11.200 5.100" fill="none" stroke="#c5c8cb" stroke-width="1.100"/></svg>
<div class="th" style="left:939px">Keterangan</div><svg class="srt" style="left:1057px" width="13" height="10" viewBox="0 0 13 10"><path d="M3.500 7.800 V1.200 M1.300 3.500 L3.500 1 L5.700 3.500" fill="none" stroke="#b5b8bb" stroke-width="1.1"/><path d="M9 .8 V7.400 M6.800 5.100 L9 7.600 L11.200 5.100" fill="none" stroke="#c5c8cb" stroke-width="1.100"/></svg>
<div class="td" style="left:30px;top:174px">1</div><div class="td" style="left:319px;top:174px">PROD-201910-0002</div><div class="td" style="left:495px;top:174px">CRG-201910-0002</div><div class="td" style="letter-spacing:0;left:663px;top:174px">Meja Kantor</div><div class="td" style="left:825px;top:174px">85</div>
<div class="td" style="left:30px;top:275px">2</div><div class="td" style="left:319px;top:275px">PROD-201910-0003</div><div class="td" style="left:495px;top:275px">CRG-201910-0002</div><div class="td" style="letter-spacing:0;left:663px;top:275px">Kursi Lipat Kecil</div><div class="td" style="left:825px;top:275px">190</div><div class="td" style="left:939px;top:275px">-</div>
<div class="thumb" style="top:173px;height:80px"><svg width="126" height="71" viewBox="0 0 126 71.500" preserveAspectRatio="none" style="display:block">
<rect width="126" height="71.500" fill="#ecf0f5"/>
<rect width="126" height="3.200" fill="#dee1e6"/>
<rect y="3.200" width="126" height="6" fill="#fff"/>
<g opacity=".9"><rect x="2" y="1" width="2" height="1.300" fill="#f39a1d"/><rect x="15" y="1" width="2" height="1.300" fill="#f07020"/><rect x="28" y="1" width="2" height="1.300" fill="#2a56c6"/><rect x="41" y="1" width="2.500" height="1.300" fill="#3b6fc4"/><rect x="54" y="1" width="2" height="1.300" fill="#5a3e99"/><rect x="67" y="1" width="2.500" height="1.300" fill="#4cb748"/><rect x="80" y="1" width="2" height="1.300" fill="#c0c4cc"/></g>
<rect x="92" y=".5" width="13" height="2.700" fill="#fff"/><rect x="93.500" y="1.200" width="1.600" height="1.300" fill="#f07020"/>
<rect x="11" y="4.200" width="100" height="1.800" rx=".9" fill="#eef0f2"/>
<g fill="#f5c344"><rect x="2" y="6.900" width="1.500" height="1.500"/><rect x="8" y="6.900" width="1.500" height="1.500"/><rect x="15" y="6.900" width="1.500" height="1.500"/><rect x="25" y="6.900" width="1.500" height="1.500"/><rect x="32" y="6.900" width="1.500" height="1.500"/><rect x="39" y="6.900" width="1.500" height="1.500"/><rect x="47" y="6.900" width="1.500" height="1.500"/><rect x="54" y="6.900" width="1.500" height="1.500"/><rect x="63" y="6.900" width="1.500" height="1.500"/><rect x="70" y="6.900" width="1.500" height="1.500"/><rect x="77" y="6.900" width="1.500" height="1.500"/><rect x="85" y="6.900" width="1.500" height="1.500"/><rect x="96" y="6.900" width="1.500" height="1.500"/><rect x="115" y="6.900" width="1.500" height="1.500"/></g>
<g fill="#9aa0a6" opacity=".55"><rect x="4" y="7.200" width="3" height=".9"/><rect x="10" y="7.200" width="4" height=".9"/><rect x="17" y="7.200" width="7" height=".9"/><rect x="27" y="7.200" width="4" height=".9"/><rect x="34" y="7.200" width="4" height=".9"/><rect x="41" y="7.200" width="4" height=".9"/><rect x="49" y="7.200" width="4" height=".9"/><rect x="56" y="7.200" width="6" height=".9"/><rect x="65" y="7.200" width="3" height=".9"/><rect x="72" y="7.200" width="3" height=".9"/><rect x="79" y="7.200" width="5" height=".9"/><rect x="87" y="7.200" width="8" height=".9"/><rect x="98" y="7.200" width="7" height=".9"/><rect x="117" y="7.200" width="8" height=".9"/></g>
<rect y="9.300" width="126" height="4" fill="#1489b6"/><rect y="9.300" width="19" height="4" fill="#107aa3"/>
<rect x="4" y="10.600" width="11" height="1.400" fill="#cfe8f2" opacity=".9"/><rect x="20.500" y="11" width="1.500" height=".7" fill="#fff"/><rect x="115.500" y="10.400" width="2" height="1.800" fill="#e0c090"/><rect x="118.500" y="10.800" width="5" height="1" fill="#d5ecf5"/>
<rect y="13.300" width="19" height="54" fill="#222d32"/>
<circle cx="3" cy="16.500" r="2" fill="#d9a070"/><rect x="6.500" y="15.300" width="5" height=".9" fill="#e8ecee"/><rect x="6.500" y="17.200" width="3.500" height=".8" fill="#b8c7ce"/>
<rect y="20.500" width="19" height="2.500" fill="#1a2226"/>
<g fill="#b8c7ce" opacity=".85"><rect x="1.500" y="24.500" width="8" height=".9"/><rect x="1.500" y="28" width="4.500" height=".9"/><rect x="1.500" y="32" width="4" height=".9"/><rect x="1.500" y="35.800" width="4.500" height=".9"/><rect x="1.500" y="39.500" width="6" height=".9"/><rect x="1.500" y="42.700" width="8" height=".9"/></g>
<rect y="46" width="19" height="3.500" fill="#1a2226"/><rect x="1.500" y="50.300" width="1" height="1" fill="#1489b6"/><rect x="3.200" y="50.400" width="3.500" height=".9" fill="#b8c7ce"/>
<rect x="21" y="15" width="12" height="1.500" fill="#5b646b" opacity=".7"/><rect x="119" y="15.600" width="4" height=".8" fill="#9aa0a6"/>
<rect x="20.500" y="18" width="41.500" height="43" fill="#fff"/><rect x="20.500" y="18" width="41.500" height=".5" fill="#c7d3de"/>
<g fill="#eceff1"><rect x="22" y="22.500" width="38" height="1.800"/><rect x="22" y="28.300" width="38" height="1.800"/><rect x="22" y="34.200" width="38" height="1.800"/></g>
<g fill="none" stroke="#dfe3e6" stroke-width=".4"><rect x="22" y="40" width="38" height="2"/><rect x="22" y="46" width="38" height="1.800"/><rect x="22" y="51.500" width="38" height="1.800"/></g>
<g fill="#6b747b" opacity=".8"><rect x="22" y="20.600" width="4" height=".9"/><rect x="22" y="26.300" width="6" height=".9"/><rect x="22" y="32.200" width="2.500" height=".9"/><rect x="22" y="38" width="6" height=".9"/><rect x="22" y="44" width="7" height=".9"/><rect x="22" y="49.600" width="6" height=".9"/></g>
<rect x="22" y="56.600" width="9" height="2.600" rx=".4" fill="#1a86b4"/>
<rect x="64" y="18" width="59" height="23" fill="#fff"/><rect x="64" y="18" width="59" height=".5" fill="#c7d3de"/>
<rect x="65" y="19.800" width="3" height=".8" fill="#9aa0a6"/><rect x="69.500" y="19.600" width="16" height="1.100" fill="#3a4147"/>
<rect x="65" y="24" width="9" height=".8" fill="#b5bbc0"/><rect x="105" y="24" width="4" height=".8" fill="#b5bbc0"/><rect x="109" y="23.300" width="12" height="2.200" fill="none" stroke="#e0e4e8" stroke-width=".4"/>
<g fill="#4a5157"><rect x="66" y="27.600" width="1" height=".9"/><rect x="69" y="27.600" width="1" height=".9"/><rect x="71.500" y="27.600" width="5" height=".9"/><rect x="86.500" y="27.600" width="7" height=".9"/><rect x="98.500" y="27.600" width="2.500" height=".9"/><rect x="105.500" y="27.600" width="3.500" height=".9"/><rect x="115.500" y="27.600" width="2.500" height=".9"/></g>
<rect x="65" y="32.800" width="57" height="2.800" fill="#f5f6f7"/>
<g fill="#7d858c" opacity=".85"><rect x="66" y="30.800" width="1" height=".8"/><rect x="71.500" y="30.800" width="11" height=".8"/><rect x="86.500" y="30.800" width="5.500" height=".8"/><rect x="98.500" y="30.800" width="2.500" height=".8"/><rect x="105.500" y="30.800" width="2.500" height=".8"/><rect x="66" y="33.800" width="1" height=".8"/><rect x="71.500" y="33.800" width="11" height=".8"/><rect x="86.500" y="33.800" width="6" height=".8"/><rect x="98.500" y="33.800" width="2.500" height=".8"/></g>
<rect x="115.300" y="30.200" width="5.800" height="2.100" fill="#1fae6b"/><rect x="105.300" y="33.300" width="8.700" height="2.100" fill="#e23b32"/><rect x="115.300" y="33.300" width="5.800" height="2.100" fill="#17b6e6"/>
<rect x="65" y="37.700" width="11" height=".8" fill="#c1c7cc"/><rect x="109.500" y="37" width="4" height="2.200" fill="none" stroke="#e3e6e9" stroke-width=".3"/><rect x="115.200" y="37" width="2.700" height="2.200" fill="#1a78b4"/><rect x="119" y="37" width="2.700" height="2.200" fill="none" stroke="#e3e6e9" stroke-width=".3"/>
<rect x="19" y="63.800" width="106" height="3.500" fill="#fff"/><rect x="20.500" y="65" width="13" height=".8" fill="#aab0b5"/><rect x="35" y="65" width="10" height=".8" fill="#68b3d4"/>
<rect x="124.600" y="9.300" width="1.400" height="58" fill="#5f6368" opacity=".75"/>
<rect y="67.200" width="126" height="4.300" fill="#0c0d0f"/><rect x="4.500" y="67.400" width="31.500" height="3.900" fill="#f4f4f4"/><rect x="8" y="68.800" width="12" height=".9" fill="#9aa0a6"/><rect x="1.200" y="68.200" width="2" height="2" fill="#fff"/>
<g><rect x="38" y="68.300" width="1.800" height="1.800" fill="#c9c9c9"/><rect x="42" y="68" width="2.400" height="2.400" fill="#e6b63a"/><rect x="46.500" y="68" width="2.400" height="2.400" fill="#2cb742"/><rect x="51" y="68" width="2.400" height="2.400" fill="#e33b3b"/><rect x="55.500" y="68" width="2.400" height="2.400" fill="#c94a5a"/><rect x="57" y="68" width="1" height="2.400" fill="#3a9ad9"/><rect x="60" y="68" width="2.400" height="2.400" fill="#d93838"/><rect x="64.500" y="68" width="2.400" height="2.400" fill="#3b72c4"/><rect x="69" y="68" width="2.400" height="2.400" fill="#1a73c9"/></g>
<rect x="108" y="68.600" width="10" height="1.400" fill="#4a4d52"/><rect x="121" y="68.200" width="2.300" height="2.200" fill="#d8d8d8"/>
</svg></div>
<div class="thumb" style="top:274px;height:135px"><svg width="126" height="126" viewBox="0 0 126 126" style="display:block">
<defs>
<linearGradient id="tbl" x1="0" y1="0" x2="1" y2="1"><stop offset="0" stop-color="#5b1f14"/><stop offset=".45" stop-color="#7a2a17"/><stop offset=".8" stop-color="#3a0d08"/><stop offset="1" stop-color="#140303"/></linearGradient>
<radialGradient id="sau" cx=".5" cy=".35" r=".75"><stop offset="0" stop-color="#e9e6dc"/><stop offset=".55" stop-color="#d9d6ca"/><stop offset=".85" stop-color="#b9b5a6"/><stop offset="1" stop-color="#8c887a"/></radialGradient>
<linearGradient id="cup" x1="0" y1="0" x2="1" y2="0"><stop offset="0" stop-color="#b9b3a3"/><stop offset=".25" stop-color="#d6d1c4"/><stop offset=".6" stop-color="#cfc8ba"/><stop offset="1" stop-color="#9d9586"/></linearGradient>
<radialGradient id="cof" cx=".45" cy=".6" r=".7"><stop offset="0" stop-color="#efc08a"/><stop offset=".5" stop-color="#dc9a5c"/><stop offset="1" stop-color="#a8602c"/></radialGradient>
<linearGradient id="bg2" x1="0" y1="0" x2="1" y2="0"><stop offset="0" stop-color="#b6b4a6"/><stop offset="1" stop-color="#9fa3a0"/></linearGradient>
<filter id="bl" x="-20%" y="-20%" width="140%" height="140%"><feGaussianBlur stdDeviation="1.600"/></filter>
<filter id="bs" x="-20%" y="-20%" width="140%" height="140%"><feGaussianBlur stdDeviation=".6"/></filter>
<clipPath id="cp"><rect width="126" height="126"/></clipPath>
</defs>
<g clip-path="url(#cp)">
<rect width="126" height="126" fill="url(#tbl)"/>
<g filter="url(#bl)">
<rect x="60" y="-4" width="70" height="48" fill="url(#bg2)"/>
<path d="M96 30 L130 52 V-4 H96 Z" fill="#a9aba6"/>
<rect x="40" y="2" width="26" height="22" fill="#b8501c"/>
<rect x="66" y="-2" width="10" height="14" fill="#c9c7b8"/>
<rect x="28" y="-4" width="15" height="46" fill="#6d3d22"/>
<rect x="-4" y="-4" width="33" height="70" fill="#0b0707"/>
<path d="M-4 60 L30 42 L30 70 L-4 90 Z" fill="#3a0f0a"/>
<path d="M-4 130 V100 Q40 128 130 118 V130 Z" fill="#0e0303"/>
<ellipse cx="72" cy="102" rx="52" ry="14" fill="#1a0606" opacity=".85"/>
<path d="M88 26 L130 46 V100 L88 70 Z" fill="#7d2b17"/>
<path d="M118 46 L130 52 V126 L112 126 Z" fill="#74280f"/>
<path d="M-4 104 Q50 122 130 108 V130 H-4 Z" fill="#070202"/>
<path d="M-4 66 L28 50 L34 76 L10 100 L-4 104 Z" fill="#4a150d"/>
</g>
<g filter="url(#bs)">
<rect x="8" y="26" width="10" height="14" fill="#3e3e3b"/><rect x="10" y="28" width="2" height="10" fill="#a9a9a4"/><rect x="14.500" y="27" width="2" height="11" fill="#8d8d88"/>
<ellipse cx="66" cy="81.500" rx="51.500" ry="29.500" fill="#6d6856"/>
<ellipse cx="66" cy="80" rx="51.500" ry="29" fill="url(#sau)"/>
<ellipse cx="66" cy="77" rx="36" ry="18" fill="#c9c5b6" opacity=".75"/><path d="M14.500 80 Q16 62 40 54 Q30 70 34 86 Q44 102 70 106 Q40 110 22 96 Q14.500 88 14.500 80 Z" fill="#8d8978" opacity=".5"/><ellipse cx="64" cy="82" rx="27" ry="9" fill="#6f6a5a" opacity=".45"/>
<path d="M98 60 Q112 68 108 84 Q98 72 90 70 Z" fill="#f4f3ec" opacity=".8"/>
<path d="M18 72 Q22 62 34 57 L38 64 Q28 68 25 78 Z" fill="#f4f3ec" opacity=".6"/>
<path d="M30.800 26 Q30 52 40 66 Q47 80 58 83.500 Q68 85.500 78 83 Q88 78 91 64 Q95.500 48 95.500 26 Z" fill="url(#cup)"/>
<path d="M32.500 48 Q60 58 94 46 Q93 58 91 64 Q88 78 78 83 Q68 85.500 58 83.500 Q47 80 40 66 Q34 58 32.500 48 Z" fill="#9a927f" opacity=".38"/><path d="M38 62 Q47 80 58 83.500 Q68 85.500 78 83 Q87 78 90.500 66 Q80 78 64 77 Q48 74 38 62 Z" fill="#857e6e" opacity=".55"/>
<path d="M94 21.500 Q100 14 107 15.500 Q115 19 112.500 31 Q110 42 103 49 Q99 52.500 94.500 54 L95 47 Q101 44 104.500 37 Q108.500 27 106 22.500 Q102.500 20 98.500 27 Q96.500 31 95.500 34 Z" fill="#d6d0c2"/>
<path d="M106 22.500 Q108.500 27 104.500 37 Q101 44 95 47" fill="none" stroke="#8f8878" stroke-width="1.100" opacity=".7"/>
<ellipse cx="63" cy="25" rx="32.500" ry="13.600" fill="#dedacd"/>
<ellipse cx="63" cy="26" rx="30" ry="11.500" fill="#7a3f1b"/>
<ellipse cx="63" cy="28" rx="28.500" ry="9.600" fill="url(#cof)"/>
<path d="M40 29 Q56 22 82 25 Q66 29 55 35.500 Q45 35.500 40 29 Z" fill="#f3d3a6" opacity=".55"/>
<path d="M34.500 21 Q46 13 64 12.500 Q82 13 92 20 Q80 15.500 63 15.500 Q45 16.500 34.500 21 Z" fill="#8a4a22" opacity=".8"/>
</g>
<g fill="none" stroke="#1e2a3c" stroke-linejoin="round">
<path d="M61.700 53.500 L73 46.800 L84.300 48.600 L84.300 68.800 L73.500 74.800 L61.700 71 Z" stroke-width="1.800"/>
<path d="M66.500 63 q2 -7 4 -1 q1 4 3 -2 q1 -3 2 1 q1 3 4 -3 M69 56 q3 -4 5 0 M67 68.500 h13" stroke-width="1.500"/>
<path d="M71 50.800 q1.500 -2 3 0" stroke-width=".9"/>
</g>
<g filter="url(#bs)">
<path d="M27 86.500 Q30 80.500 40 82.500 Q50 85.500 53 92 Q50 99 41 98 Q30 96 27 86.500 Z" fill="#35342f"/>
<path d="M30 87 Q33 83.500 40 85 Q48 87.500 50 92 Q46 95 41 94 Q33 92 30 87 Z" fill="#8e8c84"/>
<path d="M51 94 Q58 88 66 86 Q90 87 112 88 Q116 90 112 92 Q104 94 96 92 Q80 88.500 67 89.500 Q60 92 54 97.500 Z" fill="#45443f"/>
<path d="M68 87 Q92 88 111 89.500" fill="none" stroke="#e8e8e4" stroke-width="1.300"/>
<path d="M96 90.500 Q106 93 113 90" fill="none" stroke="#c8c8c4" stroke-width="1.200"/>
</g>
</g>
</svg></div>


</div>

</div>
<div id="sb">
  <svg class="abs" style="left:4px;top:6px" width="9" height="6" viewBox="0 0 9 6"><path d="M4.500 .5 L8.500 5.500 H.5 Z" fill="#505050"/></svg>
  <div class="abs" style="left:2px;top:62px;width:13px;height:284px;background:#c1c1c1"></div>
  <svg class="abs" style="left:4px;top:613px" width="9" height="6" viewBox="0 0 9 6"><path d="M4.500 5.500 L8.500 .5 H.5 Z" fill="#505050"/></svg>
</div>
<!-- ===== taskbar ===== -->
<div id="taskbar">
  <!-- start -->
  <svg class="abs" style="left:15px;top:11px" width="18" height="18" viewBox="0 0 18 18"><path d="M.6 2.300 L7 1.760 V8.200 H.6 Z M7.900 1.690 L17.300 .9 V8.200 H7.900 Z M.6 9 H7 V15.860 L.6 15 Z M7.900 9 H17.300 V17.250 L7.900 15.980 Z" fill="#fff"/></svg>
  <!-- search -->
  <div class="abs" style="left:48px;top:0;width:343px;height:40px;background:#f2f2f2;border-top:1px solid #d0d0d0"></div>
  <svg class="abs" style="left:59px;top:11px" width="18" height="18" viewBox="0 0 18 18"><circle cx="11" cy="6.800" r="5" fill="none" stroke="#222" stroke-width="1.400"/><path d="M7.400 10.500 L1.200 16.800" stroke="#222" stroke-width="1.600"/></svg>
  <div class="abs" style="left:88px;top:10px;font-size:14.600px;line-height:20px;color:#2b2b2b;white-space:nowrap;letter-spacing:-.03px">Type here to search</div>
  <!-- task view -->
  <svg class="abs" style="left:407px;top:12px" width="18" height="16" viewBox="0 0 18 16"><path d="M1.500 2.500 V.5 H11.500 V2.500 M1.500 12.700 V14.500 H11.500 V12.700" stroke="#fff" stroke-width="1" fill="none"/><rect x="1.500" y="4.500" width="10" height="6.500" fill="none" stroke="#fff" stroke-width="1"/><path d="M15.500 .3 V15" stroke="#fff" stroke-width="1"/><rect x="14.300" y="3.800" width="2.600" height="3.400" fill="#fff"/></svg>
  <!-- whatsapp -->
  <svg class="abs" style="left:455px;top:8px" width="24" height="24" viewBox="0 0 24 24"><path d="M1 23 L2.700 17.200 A11 11 0 1 1 6.800 21.300 Z" fill="#fff"/><path d="M2.900 21.100 L4.200 17 A9.300 9.300 0 1 1 7.200 19.900 Z" fill="#2cb742"/><path d="M8.300 6.800 C7.800 6.700 7.200 7.300 7 8 C6.600 9.600 7.800 12 9.500 13.700 C11.200 15.400 13.800 16.800 15.400 16.500 C16.300 16.300 17 15.500 17 14.900 L14.800 13.500 L13.700 14.500 C12.500 14 10.800 12.400 10 11 L11 9.800 L9.700 6.900 Z" fill="#fff"/></svg>
  <!-- explorer -->
  <svg class="abs" style="left:504px;top:9px" width="24" height="22" viewBox="0 0 24 22"><path d="M1 2 H8.500 L10.500 4 H22 V8 H1 Z" fill="#e6a823"/><rect x="1" y="5.500" width="22" height="14.500" rx=".8" fill="#ffd766"/><path d="M1 20 V8 H23" fill="none" stroke="#f7c648" stroke-width="1"/><path d="M6.500 20 V13.500 H17.500 V20 H14.500 V16.500 H9.500 V20 Z" fill="#3b90d6"/></svg>
  <!-- vscode -->
  <svg class="abs" style="left:552px;top:8px" width="25" height="24" viewBox="0 0 25 24"><path d="M3 5.600 L.6 8 L17.500 24 V17.800 Z" fill="#0b7fd0"/><path d="M3 18.400 L.6 16 L17.500 0 V6.200 Z" fill="#1a93e6"/><path d="M17.500 0 L25 3.200 V20.800 L17.500 24 Z" fill="#2aa6f4"/></svg>
  <!-- chrome -->
  <div class="abs" style="left:590px;top:0;width:48px;height:40px;background:#4f5964"></div>
  <svg class="abs" style="left:602px;top:8px" width="24" height="24" viewBox="0 0 48 48"><circle cx="24" cy="24" r="22" fill="#fff"/><path d="M24 2 A22 22 0 0 1 43.050 13 H24 A11 11 0 0 0 14.470 18.500 L4.950 13 A22 22 0 0 1 24 2 Z" fill="#db4437"/><path d="M43.050 13 A22 22 0 0 1 24 46 L33.530 29.500 A11 11 0 0 0 33.530 18.500 L24 13 Z" fill="#f4c20d"/><path d="M24 46 A22 22 0 0 1 4.950 13 L14.470 29.500 A11 11 0 0 0 33.530 29.500 Z" fill="#0f9d58"/><circle cx="24" cy="24" r="10.500" fill="#fff"/><circle cx="24" cy="24" r="8.500" fill="#4285f4"/></svg>
  <!-- github desktop -->
  <svg class="abs" style="left:650px;top:7px" width="26" height="26" viewBox="0 0 26 26"><circle cx="13" cy="13" r="12.300" fill="#fff"/><circle cx="13" cy="13" r="11" fill="#6e3a94"/><path d="M6.300 8 L7.200 11 C6 13 6 15.500 7.500 17 C9 18.700 17 18.700 18.500 17 C20 15.500 20 13 18.800 11 L19.700 8 L16.300 9.600 C14.500 9 11.500 9 9.700 9.600 Z" fill="#e9dff3"/></svg>
  <!-- onenote -->
  <svg class="abs" style="left:700px;top:8px" width="24" height="24" viewBox="0 0 24 24"><rect x="10" y="3.500" width="13" height="17" fill="#fff" stroke="#80397b" stroke-width="1"/><path d="M17 6.500 H21 M17 9.500 H21 M17 12.500 H21 M17 15.500 H21" stroke="#80397b" stroke-width="1.500"/><path d="M0 2.800 L14 .3 V23.700 L0 21.200 Z" fill="#80397b"/><path d="M3.800 16.500 V7.500 L9.200 16.500 V7.500" fill="none" stroke="#fff" stroke-width="1.700"/></svg>
  <!-- underlines -->
  <div class="abs" style="left:447px;top:38px;width:40px;height:2px;background:#76b9ed"></div>
  <div class="abs" style="left:496px;top:38px;width:40px;height:2px;background:#76b9ed"></div>
  <div class="abs" style="left:590px;top:38px;width:48px;height:2px;background:#76b9ed"></div>
  <div class="abs" style="left:643px;top:38px;width:40px;height:2px;background:#76b9ed"></div>
  <div class="abs" style="left:692px;top:38px;width:40px;height:2px;background:#76b9ed"></div>
  <!-- tray -->
  <svg class="abs" style="left:1153px;top:16px" width="13" height="8" viewBox="0 0 13 8"><path d="M.8 7.200 L6.500 1.200 L12.200 7.200" fill="none" stroke="#fff" stroke-width="1.300"/></svg>
  <svg class="abs" style="left:1174px;top:14px" width="18" height="12" viewBox="0 0 18 12"><path d="M4 11.500 A3.500 3.500 0 0 1 3.600 4.600 A5 5 0 0 1 13 3.800 A4 4 0 0 1 14 11.500 Z" fill="#fff"/></svg>
  <svg class="abs" style="left:1199px;top:12px" width="17" height="16" viewBox="0 0 17 16"><rect x="3.500" y="1.500" width="13" height="9" fill="none" stroke="#fff" stroke-width="1.200"/><path d="M7 14.500 H13 M10 10.500 V14.500" stroke="#fff" stroke-width="1.200"/><rect x=".5" y="5.500" width="4" height="9" fill="#1c2a3d" stroke="#fff" stroke-width="1.100"/></svg>
  <svg class="abs" style="left:1222px;top:12px" width="18" height="16" viewBox="0 0 18 16"><path d="M1 5.500 H4 L8 2 V14 L4 10.500 H1 Z" fill="none" stroke="#fff" stroke-width="1.200" stroke-linejoin="round"/><path d="M10.500 5.500 Q12 8 10.500 10.500" fill="none" stroke="#fff" stroke-width="1.100"/><path d="M12.800 3.800 Q15.300 8 12.800 12.200" fill="none" stroke="#9aa3ad" stroke-width="1"/><path d="M15 2.200 Q18.300 8 15 13.800" fill="none" stroke="#6b7683" stroke-width="1"/></svg>
  <div class="abs" style="left:1248px;top:2px;width:60px;text-align:center;font-size:11.800px;line-height:16px;color:#fff;white-space:nowrap;letter-spacing:-.2px">16:47</div>
  <div class="abs" style="left:1248px;top:20.400px;width:60px;text-align:center;font-size:11.800px;line-height:16px;color:#fff;white-space:nowrap;letter-spacing:-.2px">22/06/2020</div>
  <svg class="abs" style="left:1325px;top:11.700px" width="16" height="16" viewBox="0 0 16 16"><path d="M0 0 H16 V12.300 H13 V15.300 L10 12.300 H0 Z" fill="#fff"/><path d="M2.500 3.200 H13.500 M2.500 5.700 H13.500 M2.500 8.200 H10.500" stroke="#1c2a3d" stroke-width="1"/></svg>
  <div class="abs" style="left:1333px;top:19.500px;width:16px;height:16px;border-radius:50%;background:#2b2d31;border:1px solid #59606a;color:#fff;font-size:11.500px;font-weight:700;line-height:14px;text-align:center">3</div>
  <div class="abs" style="left:1361px;top:0;width:1px;height:40px;background:#6b7683"></div>
</div>
</body>
</html>
